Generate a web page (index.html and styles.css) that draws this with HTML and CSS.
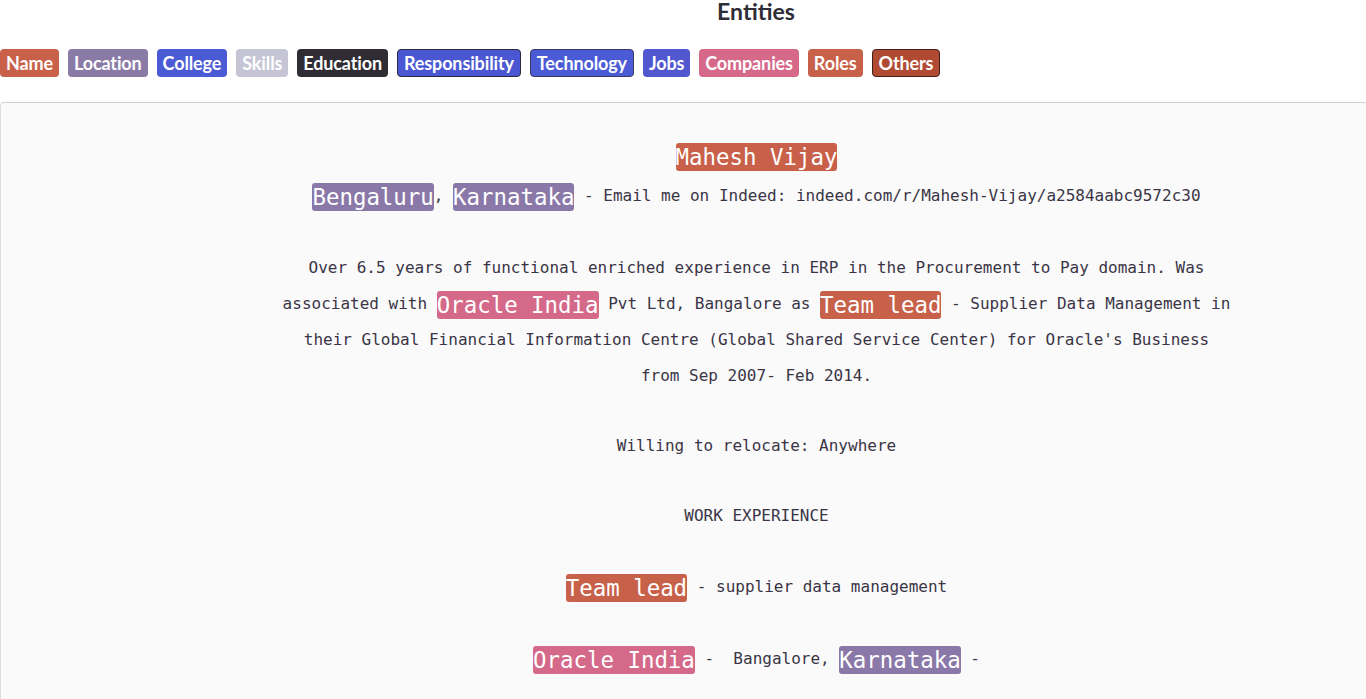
FILE: index.html
```html
<!DOCTYPE html>
<html lang="en">
<head>
<meta charset="utf-8">
<title>Entities</title>
<link rel="stylesheet" href="styles.css">
</head>
<body>
<div class="page">
  <h2 class="title">Entities</h2>
  <div class="tags">
    <span class="tag t-name">Name</span>
    <span class="tag t-location">Location</span>
    <span class="tag t-college">College</span>
    <span class="tag t-skills">Skills</span>
    <span class="tag t-education">Education</span>
    <span class="tag t-resp">Responsibility</span>
    <span class="tag t-tech">Technology</span>
    <span class="tag t-jobs">Jobs</span>
    <span class="tag t-companies">Companies</span>
    <span class="tag t-roles">Roles</span>
    <span class="tag t-others">Others</span>
  </div>
  <div class="doc">
    <p class="para p-head"><span class="ent e-name">Mahesh Vijay</span><br><span class="ent e-loc">Bengaluru</span>, <span class="ent e-loc">Karnataka</span> - Email me on Indeed: indeed.com/r/Mahesh-Vijay/a2584aabc9572c30</p>
    <p class="para">Over 6.5 years of functional enriched experience in ERP in the Procurement to Pay domain. Was<br>associated with <span class="ent e-comp">Oracle India</span> Pvt Ltd, Bangalore as <span class="ent e-role">Team lead</span> - Supplier Data Management in<br>their Global Financial Information Centre (Global Shared Service Center) for Oracle's Business<br>from Sep 2007- Feb 2014.</p>
    <p class="para">Willing to relocate: Anywhere</p>
    <p class="para">WORK EXPERIENCE</p>
    <p class="para p-tall"><span class="ent e-role">Team lead</span> - supplier data management</p>
    <p class="para p-tall"><span class="ent e-comp">Oracle India</span> -  Bangalore, <span class="ent e-loc">Karnataka</span> -</p>
  </div>
</div>
</body>
</html>
```
FILE: styles.css
```css
html, body {
  margin: 0;
  padding: 0;
  overflow: hidden;
  background: #ffffff;
}

.page {
  font-family: Lato, "Open Sans", sans-serif;
}

.title {
  margin: 0;
  padding-left: 146px;
  text-align: center;
  font-size: 23px;
  line-height: 22px;
  font-weight: 700;
  color: #2f2d36;
}

.tags {
  display: flex;
  gap: 9px;
  margin-top: 27px;
}

.tag {
  display: inline-block;
  height: 28px;
  line-height: 28px;
  padding: 0 6px;
  border-radius: 4px;
  font-size: 18px;
  font-weight: 700;
  color: #ffffff;
  letter-spacing: -0.13px;
  box-sizing: border-box;
}

.t-name { background: #c9604a; }
.t-location { background: #8a7aa6; }
.t-college { background: #4b5bd5; }
.t-skills { background: #c5c5d6; }
.t-education { background: #2f2d33; }
.t-resp { background: #4b57d2; border: 1px solid #2a2a40; line-height: 26px; }
.t-tech { background: #4b5bd5; border: 1px solid #3a3a60; line-height: 26px; }
.t-jobs { background: #5157cf; }
.t-companies { background: #d6688a; }
.t-roles { background: #c8614a; }
.t-others { background: #b04a32; border: 1px solid #402018; line-height: 26px; }

.doc {
  margin-top: 25px;
  border-top: 1px solid #cfcfd6;
  border-left: 1px solid #dcdce2;
  border-top-left-radius: 4px;
  background: #fafafa;
  padding-top: 33px;
  padding-bottom: 40px;
  padding-left: 146px;
  display: flex;
  flex-direction: column;
  gap: 34px;
  font-family: "DejaVu Sans Mono", "Liberation Mono", monospace;
  font-size: 16px;
  color: #3a3546;
  text-align: center;
}

.para {
  margin: 0;
  line-height: 36px;
  white-space: pre;
}

.p-head { line-height: 40px; }
.p-tall { line-height: 38px; }

.ent {
  display: inline-block;
  font-size: 22.4px;
  line-height: 28px;
  border-radius: 3px;
  color: #ffffff;
  vertical-align: middle;
}

.e-name { background: #c9604a; }
.e-loc { background: #8a78a8; }
.e-comp { background: #d4698a; }
.e-role { background: #c8614a; }
```
